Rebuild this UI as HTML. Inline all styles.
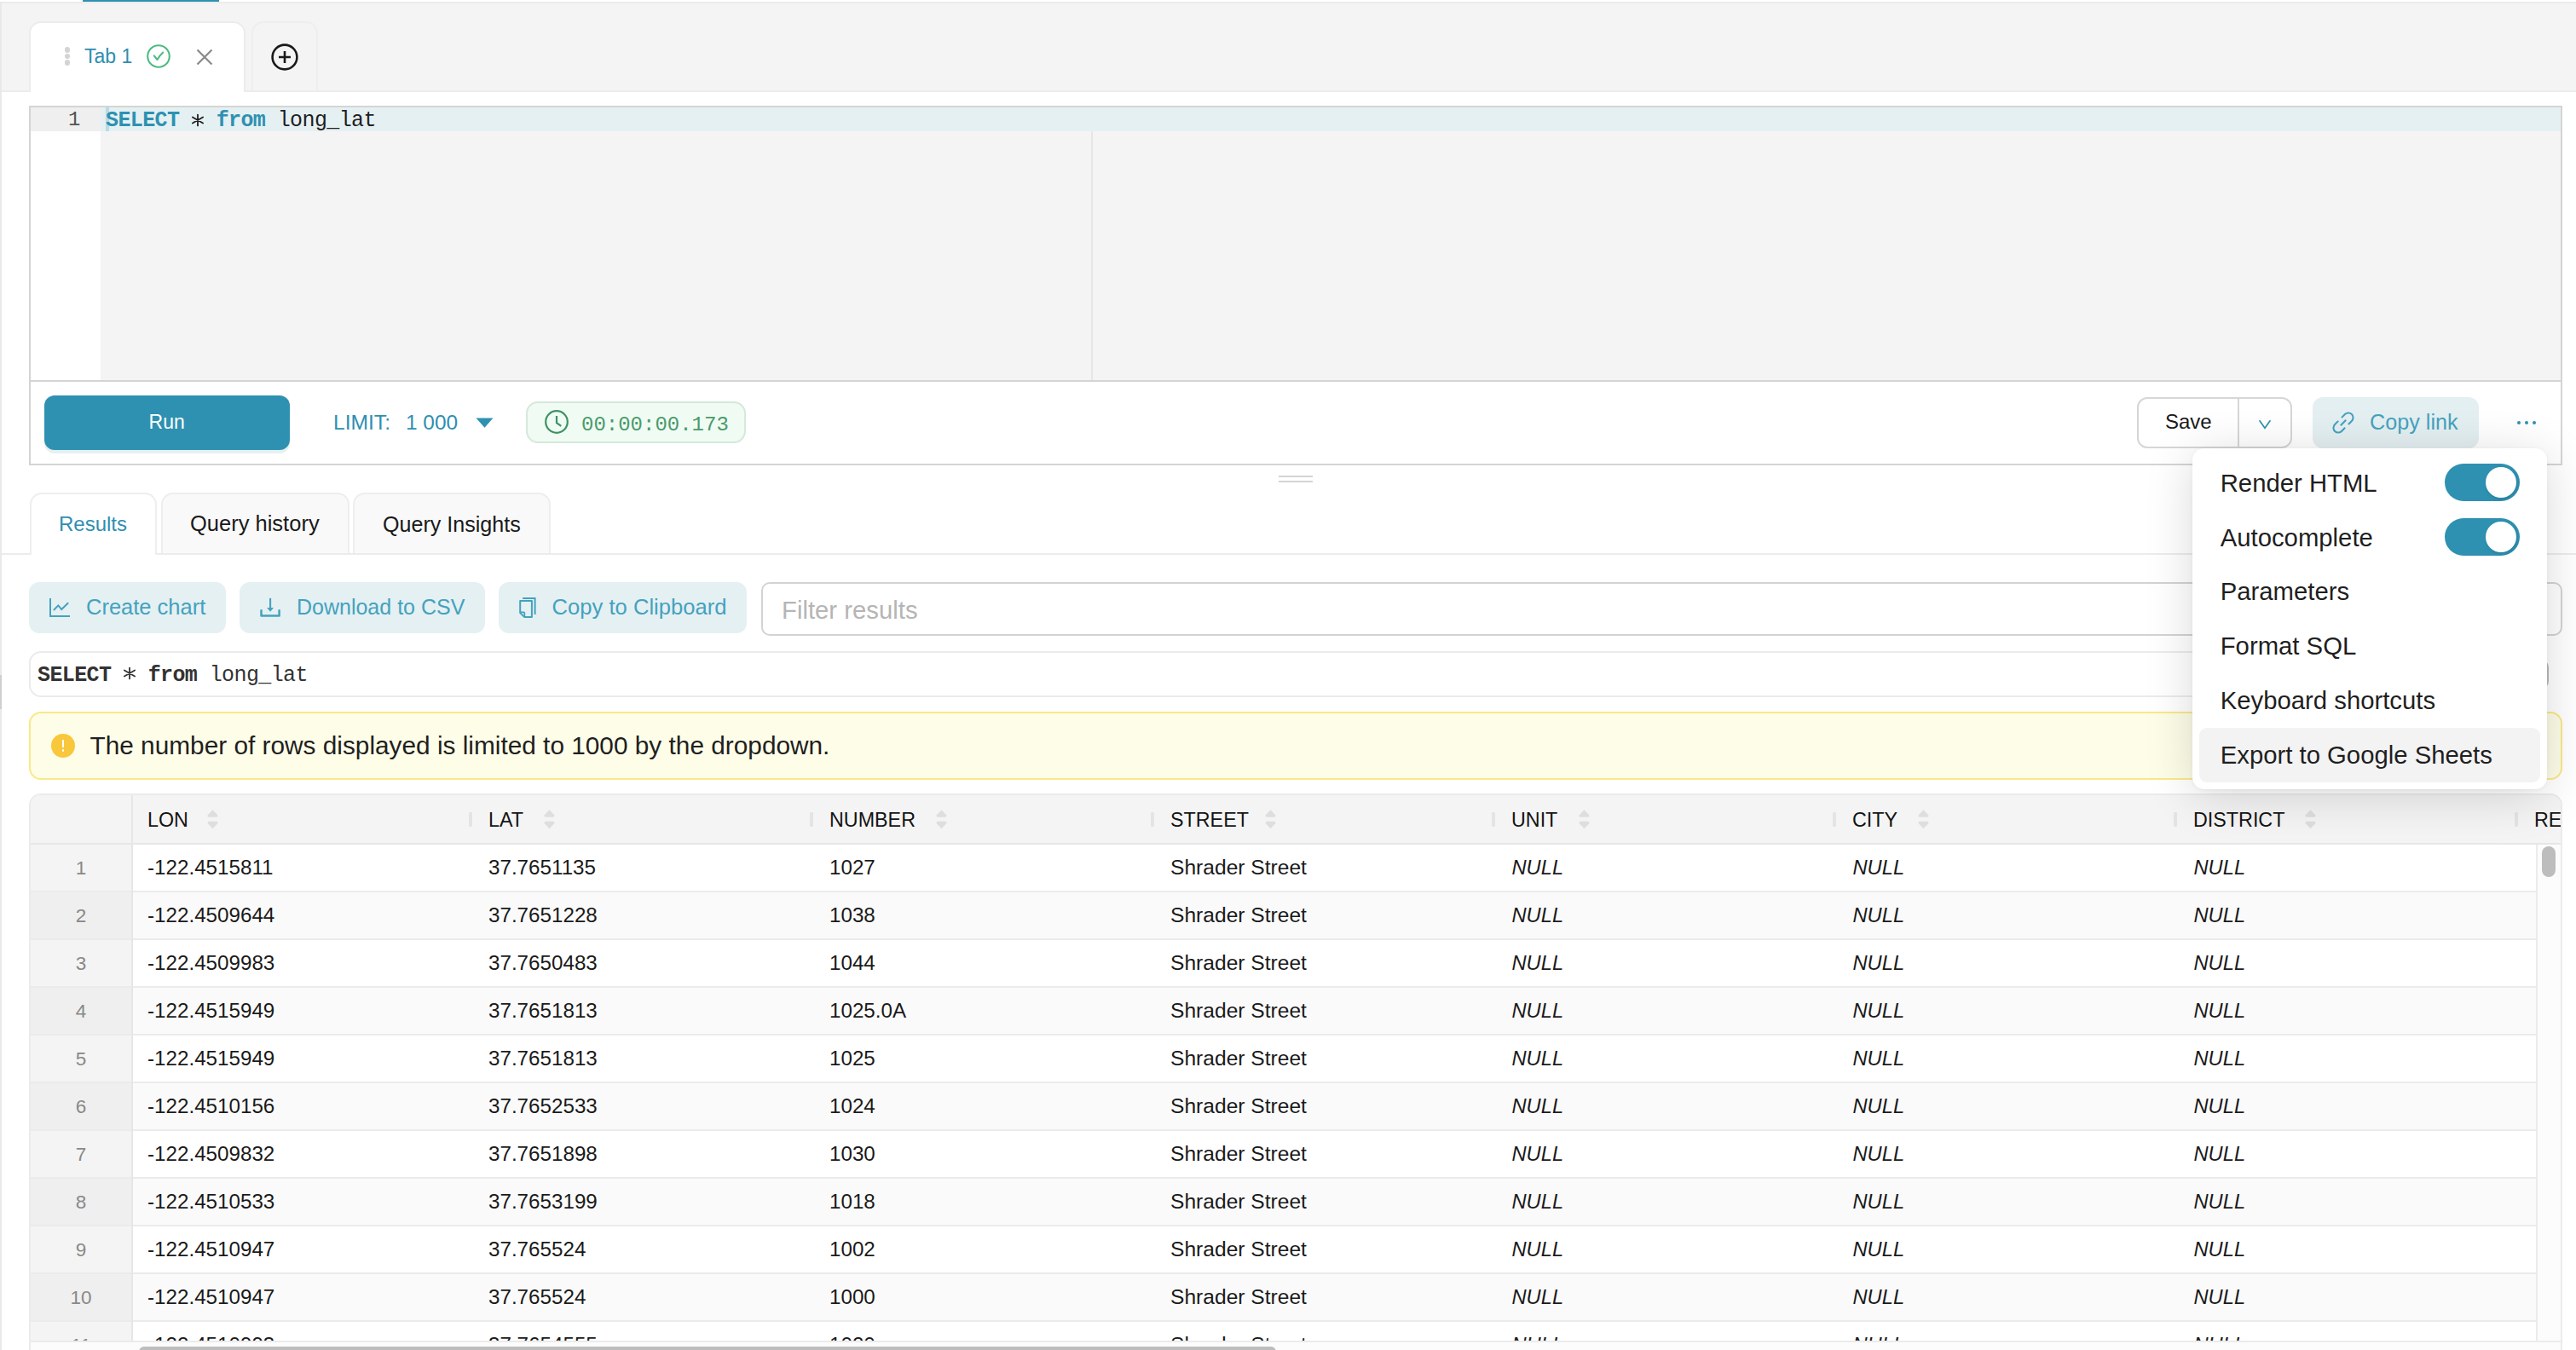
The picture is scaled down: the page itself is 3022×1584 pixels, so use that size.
<!DOCTYPE html>
<html><head><meta charset="utf-8"><title>SQL Editor</title>
<style>html,body{margin:0;padding:0;width:3022px;height:1584px;overflow:hidden;background:#fff;font-family:'Liberation Sans', sans-serif} b{font-weight:bold}</style>
</head><body>
<div style="position:absolute;left:0px;top:0px;width:3022px;height:1584px;background:#fff"></div>
<div style="position:absolute;left:0px;top:2px;width:3022px;height:106px;background:#f4f4f4;border-top:2px solid #ececec;border-bottom:2px solid #ececec;box-sizing:border-box"></div>
<div style="position:absolute;left:97px;top:0px;width:160px;height:2px;background:#2e91b1"></div>
<div style="position:absolute;left:0px;top:2px;width:2px;height:1582px;background:#e9e9e9"></div>
<div style="position:absolute;left:0px;top:792px;width:2px;height:40px;background:#cfcfcf"></div>
<div style="position:absolute;left:34px;top:25px;width:254px;height:82px;background:#fff;border:2px solid #ececec;border-bottom:none;border-radius:14px 14px 0 0;box-sizing:border-box"></div>
<div style="position:absolute;left:36px;top:100px;width:250px;height:10px;background:#fff"></div>
<div style="position:absolute;left:295px;top:25px;width:78px;height:81px;background:#f4f4f4;border:2px solid #eeeeee;border-bottom:none;border-radius:14px 14px 0 0;box-sizing:border-box"></div>
<div style="position:absolute;left:76px;top:55.3px;width:6.4px;height:6.4px;background:#d4d4d4;border-radius:50%"></div>
<div style="position:absolute;left:76px;top:62.8px;width:6.4px;height:6.4px;background:#d4d4d4;border-radius:50%"></div>
<div style="position:absolute;left:76px;top:70.3px;width:6.4px;height:6.4px;background:#d4d4d4;border-radius:50%"></div>
<div style="position:absolute;left:99px;top:54.95px;font:normal normal 23px/23px 'Liberation Sans', sans-serif;color:#2e8fb0;white-space:pre;letter-spacing:0px;">Tab 1</div>
<svg style="position:absolute;left:170px;top:50px" width="32" height="32" viewBox="0 0 32 32"><circle cx="16" cy="16" r="12.8" fill="none" stroke="#4dbb82" stroke-width="2.1"/><path d="M10.8 15.4 L14.5 20 Q17.2 15.2 21.2 11.5" fill="none" stroke="#4dbb82" stroke-width="2.1" stroke-linecap="round" stroke-linejoin="round"/></svg>
<svg style="position:absolute;left:228px;top:55px" width="24" height="24" viewBox="0 0 24 24"><path d="M3.5 3.5 L20.5 20.5 M20.5 3.5 L3.5 20.5" stroke="#8a8a8a" stroke-width="2.2"/></svg>
<svg style="position:absolute;left:316px;top:49px" width="36" height="36" viewBox="0 0 36 36"><circle cx="18" cy="18" r="14.4" fill="none" stroke="#1a1a1a" stroke-width="2.6"/><path d="M18 11 V25 M11 18 H25" stroke="#1a1a1a" stroke-width="2.6"/></svg>
<div style="position:absolute;left:34px;top:124px;width:2972px;height:324px;background:#f4f4f4;border:2px solid #d4d4d4;box-sizing:border-box"></div>
<div style="position:absolute;left:36px;top:126px;width:82px;height:320px;background:#fff"></div>
<div style="position:absolute;left:36px;top:126px;width:82px;height:28px;background:#efefef"></div>
<div style="position:absolute;left:118px;top:126px;width:2886px;height:28px;background:#e5f0f3"></div>
<div style="position:absolute;left:1280px;top:154px;width:2px;height:292px;background:#e6e6e6"></div>
<div style="position:absolute;left:124px;top:126px;width:4px;height:28px;background:#b9dbe6"></div>
<div style="position:absolute;left:80px;top:128.76px;font:normal normal 24px/24px 'Liberation Mono', monospace;color:#555;white-space:pre;letter-spacing:0px;">1</div>
<div style="position:absolute;left:124px;top:128.80px;font:25px/25px 'Liberation Mono', monospace;letter-spacing:-0.6px;color:#1f1f1f;white-space:pre"><b style="color:#2e91b1">SELECT</b>   <b style="color:#2e91b1">from</b> long_lat</div>
<svg style="position:absolute;left:223.4px;top:131.6px" width="18" height="18" viewBox="-9 -9 18 18"><path d="M0 -6.4 V6.4 M-6.1 -3.5 L6.1 3.5 M-6.1 3.5 L6.1 -3.5" stroke="#1f1f1f" stroke-width="1.8" stroke-linecap="round"/></svg>
<div style="position:absolute;left:34px;top:448px;width:2972px;height:98px;background:#fff;border:2px solid #d4d4d4;border-top:none;box-sizing:border-box"></div>
<div style="position:absolute;left:52px;top:464px;width:288px;height:64px;background:#2e91b1;border-radius:12px;box-shadow:0 4px 0 #e5f0f2"></div>
<div style="position:absolute;left:174.6px;top:484.45px;font:normal normal 23px/23px 'Liberation Sans', sans-serif;color:#fff;white-space:pre;letter-spacing:0px;">Run</div>
<div style="position:absolute;left:391px;top:483.59px;font:normal normal 24.6px/24.6px 'Liberation Sans', sans-serif;color:#2e8fb0;white-space:pre;letter-spacing:0px;">LIMIT:</div>
<div style="position:absolute;left:476px;top:483.76px;font:normal normal 24.4px/24.4px 'Liberation Sans', sans-serif;color:#2e8fb0;white-space:pre;letter-spacing:0px;">1 000</div>
<svg style="position:absolute;left:558px;top:490px" width="21" height="12" viewBox="0 0 21 12"><path d="M0.5 0.5 H20.5 L10.5 11.8 Z" fill="#2e91b1"/></svg>
<div style="position:absolute;left:617px;top:471px;width:258px;height:49px;background:#f0fbf3;border:2px solid #d5e9da;border-radius:14px;box-sizing:border-box"></div>
<svg style="position:absolute;left:637px;top:479px" width="32" height="32" viewBox="0 0 32 32"><circle cx="16" cy="16" r="12.8" fill="none" stroke="#3d9264" stroke-width="2.2"/><path d="M16 9 V17.2 L21.3 20.8" fill="none" stroke="#3d9264" stroke-width="2.2"/></svg>
<div style="position:absolute;left:682px;top:486.76px;font:normal normal 24px/24px 'Liberation Mono', monospace;color:#4a9a6c;white-space:pre;letter-spacing:0px;">00:00:00.173</div>
<div style="position:absolute;left:2507px;top:466px;width:182px;height:60px;background:#fff;border:2px solid #d6d6d6;border-radius:12px;box-sizing:border-box"></div>
<div style="position:absolute;left:2625px;top:466px;width:2px;height:60px;background:#d6d6d6"></div>
<div style="position:absolute;left:2540px;top:482.70px;font:normal normal 24px/24px 'Liberation Sans', sans-serif;color:#1a1a1a;white-space:pre;letter-spacing:0px;">Save</div>
<svg style="position:absolute;left:2648px;top:490px" width="18" height="16" viewBox="0 0 18 16"><path d="M2.6 3.3 L9 12.2 L15.4 3.3" fill="none" stroke="#2e91b1" stroke-width="1.7"/></svg>
<div style="position:absolute;left:2713px;top:466px;width:195px;height:60px;background:#e4eff2;border-radius:12px"></div>
<svg style="position:absolute;left:2729px;top:476px" width="40" height="40" viewBox="-20 -20 40 40"><g transform="rotate(45)" fill="none" stroke="#44a2bd" stroke-width="2.1"><path d="M-5.6 2.6 V8.4 A5.6 5.6 0 0 0 5.6 8.4 V2.6"/><path d="M-5.6 -2.7 V-8.4 A5.6 5.6 0 0 1 5.6 -8.4 V-2.7"/><path d="M0 -4.5 V4.5"/></g></svg>
<div style="position:absolute;left:2780px;top:482.58px;font:normal normal 25.2px/25.2px 'Liberation Sans', sans-serif;color:#44a2bd;white-space:pre;letter-spacing:0px;">Copy link</div>
<div style="position:absolute;left:2953px;top:494px;width:4px;height:4px;background:#2e91b1;border-radius:50%"></div>
<div style="position:absolute;left:2962px;top:494px;width:4px;height:4px;background:#2e91b1;border-radius:50%"></div>
<div style="position:absolute;left:2971px;top:494px;width:4px;height:4px;background:#2e91b1;border-radius:50%"></div>
<div style="position:absolute;left:1500px;top:558px;width:40px;height:2px;background:#d4d4d4"></div>
<div style="position:absolute;left:1500px;top:564px;width:40px;height:2px;background:#d4d4d4"></div>
<div style="position:absolute;left:2px;top:649px;width:3020px;height:2px;background:#ececec"></div>
<div style="position:absolute;left:35px;top:578px;width:149px;height:73px;background:#fff;border:2px solid #eeeeee;border-bottom:none;border-radius:14px 14px 0 0;box-sizing:border-box"></div>
<div style="position:absolute;left:189px;top:578px;width:221px;height:71px;background:#f9f9f9;border:2px solid #eeeeee;border-bottom:none;border-radius:14px 14px 0 0;box-sizing:border-box"></div>
<div style="position:absolute;left:414px;top:578px;width:232px;height:71px;background:#f9f9f9;border:2px solid #eeeeee;border-bottom:none;border-radius:14px 14px 0 0;box-sizing:border-box"></div>
<div style="position:absolute;left:69px;top:602.50px;font:normal normal 24px/24px 'Liberation Sans', sans-serif;color:#2e8fb0;white-space:pre;letter-spacing:0px;">Results</div>
<div style="position:absolute;left:223px;top:602.33px;font:normal normal 25.5px/25.5px 'Liberation Sans', sans-serif;color:#1a1a1a;white-space:pre;letter-spacing:0px;">Query history</div>
<div style="position:absolute;left:449px;top:602.66px;font:normal normal 25.1px/25.1px 'Liberation Sans', sans-serif;color:#1a1a1a;white-space:pre;letter-spacing:0px;">Query Insights</div>
<div style="position:absolute;left:34px;top:683px;width:231px;height:60px;background:#e5f0f3;border-radius:12px"></div>
<div style="position:absolute;left:281px;top:683px;width:288px;height:60px;background:#e5f0f3;border-radius:12px"></div>
<div style="position:absolute;left:585px;top:683px;width:291px;height:60px;background:#e5f0f3;border-radius:12px"></div>
<svg style="position:absolute;left:57px;top:701px" width="27" height="24" viewBox="0 0 27 24"><path d="M2 1 V21.9 H25" fill="none" stroke="#44a2bd" stroke-width="2"/><path d="M5.9 15 L11.3 9.4 L15.2 14 L23.2 6.3" fill="none" stroke="#44a2bd" stroke-width="2"/></svg>
<div style="position:absolute;left:101px;top:700.03px;font:normal normal 25.5px/25.5px 'Liberation Sans', sans-serif;color:#44a2bd;white-space:pre;letter-spacing:0px;">Create chart</div>
<svg style="position:absolute;left:300px;top:698px" width="32" height="28" viewBox="0 0 32 28"><path d="M6.5 18.3 V24.6 H27.6 V18.3" fill="none" stroke="#44a2bd" stroke-width="2.5" stroke-linejoin="round" stroke-linecap="round"/><path d="M17.1 3.9 V15.5" fill="none" stroke="#44a2bd" stroke-width="2.1"/><path d="M13.1 15 H21 L17.1 19.7 Z" fill="#44a2bd"/></svg>
<div style="position:absolute;left:348px;top:700.45px;font:normal normal 25px/25px 'Liberation Sans', sans-serif;color:#44a2bd;white-space:pre;letter-spacing:0px;">Download to CSV</div>
<svg style="position:absolute;left:606px;top:698px" width="26" height="30" viewBox="0 0 26 30"><path d="M7.2 4 H21.6 V23" fill="none" stroke="#44a2bd" stroke-width="2"/><path d="M4.2 7 H17.9 V25.9 H9 L4.2 21.1 Z" fill="none" stroke="#44a2bd" stroke-width="2" stroke-linejoin="round"/><path d="M4.6 20.4 H8.5 Q9.3 20.4 9.3 21.2 V25.3" fill="none" stroke="#44a2bd" stroke-width="1.8"/></svg>
<div style="position:absolute;left:647.6px;top:699.94px;font:normal normal 25.6px/25.6px 'Liberation Sans', sans-serif;color:#44a2bd;white-space:pre;letter-spacing:0px;">Copy to Clipboard</div>
<div style="position:absolute;left:893px;top:683px;width:2113px;height:63px;background:#fff;border:2px solid #d3d3d3;border-radius:10px;box-sizing:border-box"></div>
<div style="position:absolute;left:917px;top:700.60px;font:normal normal 29.3px/29.3px 'Liberation Sans', sans-serif;color:#b5b5b5;white-space:pre;letter-spacing:0px;">Filter results</div>
<div style="position:absolute;left:34px;top:764px;width:2900px;height:54px;background:#fff;border:2px solid #ebebeb;border-radius:14px;box-sizing:border-box"></div>
<div style="position:absolute;left:2980px;top:773px;width:10px;height:36px;background:#fff;border-right:2.5px solid #bdbdbd;border-radius:0 10px 10px 0;box-sizing:border-box"></div>
<div style="position:absolute;left:44px;top:780.30px;font:25px/25px 'Liberation Mono', monospace;letter-spacing:-0.6px;color:#333;white-space:pre"><b>SELECT</b>   <b>from</b> long_lat</div>
<svg style="position:absolute;left:143.4px;top:781px" width="18" height="18" viewBox="-9 -9 18 18"><path d="M0 -6.4 V6.4 M-6.1 -3.5 L6.1 3.5 M-6.1 3.5 L6.1 -3.5" stroke="#333" stroke-width="1.8" stroke-linecap="round"/></svg>
<div style="position:absolute;left:34px;top:835px;width:2972px;height:80px;background:#fefde8;border:2px solid #fae889;border-radius:14px;box-sizing:border-box"></div>
<div style="position:absolute;left:60px;top:861px;width:28px;height:28px;background:#f9c73b;border-radius:50%"></div>
<div style="position:absolute;left:73px;top:867.8px;width:2.3px;height:9.2px;background:#fff"></div>
<div style="position:absolute;left:72.9px;top:879.4px;width:2.5px;height:2.6px;background:#fff;border-radius:30%"></div>
<div style="position:absolute;left:105.5px;top:859.67px;font:normal normal 29.8px/29.8px 'Liberation Sans', sans-serif;color:#1f1f1f;white-space:pre;letter-spacing:0px;">The number of rows displayed is limited to 1000 by the dropdown.</div>
<div style="position:absolute;left:34px;top:931px;width:2972px;height:700px;border:2px solid #ebebeb;border-bottom:none;border-radius:14px 14px 0 0;box-sizing:border-box;overflow:hidden;background:#fff">
<div style="position:absolute;left:0px;top:0px;width:2968px;height:57px;background:#f4f4f4"></div>
<div style="position:absolute;left:0px;top:56px;width:2968px;height:2px;background:#e6e6e6"></div>
<div style="position:absolute;left:0px;top:58px;width:118px;height:56px;background:#f4f4f4"></div>
<div style="position:absolute;left:120px;top:58px;width:2819px;height:56px;background:#fff"></div>
<div style="position:absolute;left:0px;top:112px;width:2939px;height:2px;background:#ebebeb"></div>
<div style="position:absolute;left:0px;top:114px;width:118px;height:56px;background:#efefef"></div>
<div style="position:absolute;left:120px;top:114px;width:2819px;height:56px;background:#fafafa"></div>
<div style="position:absolute;left:0px;top:168px;width:2939px;height:2px;background:#ebebeb"></div>
<div style="position:absolute;left:0px;top:170px;width:118px;height:56px;background:#f4f4f4"></div>
<div style="position:absolute;left:120px;top:170px;width:2819px;height:56px;background:#fff"></div>
<div style="position:absolute;left:0px;top:224px;width:2939px;height:2px;background:#ebebeb"></div>
<div style="position:absolute;left:0px;top:226px;width:118px;height:56px;background:#efefef"></div>
<div style="position:absolute;left:120px;top:226px;width:2819px;height:56px;background:#fafafa"></div>
<div style="position:absolute;left:0px;top:280px;width:2939px;height:2px;background:#ebebeb"></div>
<div style="position:absolute;left:0px;top:282px;width:118px;height:56px;background:#f4f4f4"></div>
<div style="position:absolute;left:120px;top:282px;width:2819px;height:56px;background:#fff"></div>
<div style="position:absolute;left:0px;top:336px;width:2939px;height:2px;background:#ebebeb"></div>
<div style="position:absolute;left:0px;top:338px;width:118px;height:56px;background:#efefef"></div>
<div style="position:absolute;left:120px;top:338px;width:2819px;height:56px;background:#fafafa"></div>
<div style="position:absolute;left:0px;top:392px;width:2939px;height:2px;background:#ebebeb"></div>
<div style="position:absolute;left:0px;top:394px;width:118px;height:56px;background:#f4f4f4"></div>
<div style="position:absolute;left:120px;top:394px;width:2819px;height:56px;background:#fff"></div>
<div style="position:absolute;left:0px;top:448px;width:2939px;height:2px;background:#ebebeb"></div>
<div style="position:absolute;left:0px;top:450px;width:118px;height:56px;background:#efefef"></div>
<div style="position:absolute;left:120px;top:450px;width:2819px;height:56px;background:#fafafa"></div>
<div style="position:absolute;left:0px;top:504px;width:2939px;height:2px;background:#ebebeb"></div>
<div style="position:absolute;left:0px;top:506px;width:118px;height:56px;background:#f4f4f4"></div>
<div style="position:absolute;left:120px;top:506px;width:2819px;height:56px;background:#fff"></div>
<div style="position:absolute;left:0px;top:560px;width:2939px;height:2px;background:#ebebeb"></div>
<div style="position:absolute;left:0px;top:562px;width:118px;height:56px;background:#efefef"></div>
<div style="position:absolute;left:120px;top:562px;width:2819px;height:56px;background:#fafafa"></div>
<div style="position:absolute;left:0px;top:616px;width:2939px;height:2px;background:#ebebeb"></div>
<div style="position:absolute;left:0px;top:618px;width:118px;height:56px;background:#f4f4f4"></div>
<div style="position:absolute;left:120px;top:618px;width:2819px;height:56px;background:#fff"></div>
<div style="position:absolute;left:0px;top:672px;width:2939px;height:2px;background:#ebebeb"></div>
<div style="position:absolute;left:118px;top:0px;width:2px;height:700px;background:#e6e6e6"></div>
<div style="position:absolute;left:137px;top:17.80px;font:normal normal 23.3px/23.3px 'Liberation Sans', sans-serif;color:#141414;white-space:pre;letter-spacing:0px;">LON</div>
<svg style="position:absolute;left:207.0px;top:17px" width="13" height="23" viewBox="0 0 13 23"><path d="M6.5 0.3 L12.2 6.3 Q13 8.8 10.5 8.8 H2.5 Q0 8.8 0.8 6.3 Z" fill="#dedede"/><path d="M6.5 22.2 L12.2 16.2 Q13 13.7 10.5 13.7 H2.5 Q0 13.7 0.8 16.2 Z" fill="#dedede"/></svg>
<div style="position:absolute;left:514px;top:20px;width:4px;height:17px;background:#e4e4e4;border-radius:1px"></div>
<div style="position:absolute;left:537px;top:17.80px;font:normal normal 23.3px/23.3px 'Liberation Sans', sans-serif;color:#141414;white-space:pre;letter-spacing:0px;">LAT</div>
<svg style="position:absolute;left:601.8px;top:17px" width="13" height="23" viewBox="0 0 13 23"><path d="M6.5 0.3 L12.2 6.3 Q13 8.8 10.5 8.8 H2.5 Q0 8.8 0.8 6.3 Z" fill="#dedede"/><path d="M6.5 22.2 L12.2 16.2 Q13 13.7 10.5 13.7 H2.5 Q0 13.7 0.8 16.2 Z" fill="#dedede"/></svg>
<div style="position:absolute;left:914px;top:20px;width:4px;height:17px;background:#e4e4e4;border-radius:1px"></div>
<div style="position:absolute;left:937px;top:17.80px;font:normal normal 23.3px/23.3px 'Liberation Sans', sans-serif;color:#141414;white-space:pre;letter-spacing:0px;">NUMBER</div>
<svg style="position:absolute;left:1061.8px;top:17px" width="13" height="23" viewBox="0 0 13 23"><path d="M6.5 0.3 L12.2 6.3 Q13 8.8 10.5 8.8 H2.5 Q0 8.8 0.8 6.3 Z" fill="#dedede"/><path d="M6.5 22.2 L12.2 16.2 Q13 13.7 10.5 13.7 H2.5 Q0 13.7 0.8 16.2 Z" fill="#dedede"/></svg>
<div style="position:absolute;left:1314px;top:20px;width:4px;height:17px;background:#e4e4e4;border-radius:1px"></div>
<div style="position:absolute;left:1337px;top:17.80px;font:normal normal 23.3px/23.3px 'Liberation Sans', sans-serif;color:#141414;white-space:pre;letter-spacing:0px;">STREET</div>
<svg style="position:absolute;left:1448.4px;top:17px" width="13" height="23" viewBox="0 0 13 23"><path d="M6.5 0.3 L12.2 6.3 Q13 8.8 10.5 8.8 H2.5 Q0 8.8 0.8 6.3 Z" fill="#dedede"/><path d="M6.5 22.2 L12.2 16.2 Q13 13.7 10.5 13.7 H2.5 Q0 13.7 0.8 16.2 Z" fill="#dedede"/></svg>
<div style="position:absolute;left:1714px;top:20px;width:4px;height:17px;background:#e4e4e4;border-radius:1px"></div>
<div style="position:absolute;left:1737px;top:17.80px;font:normal normal 23.3px/23.3px 'Liberation Sans', sans-serif;color:#141414;white-space:pre;letter-spacing:0px;">UNIT</div>
<svg style="position:absolute;left:1815.6px;top:17px" width="13" height="23" viewBox="0 0 13 23"><path d="M6.5 0.3 L12.2 6.3 Q13 8.8 10.5 8.8 H2.5 Q0 8.8 0.8 6.3 Z" fill="#dedede"/><path d="M6.5 22.2 L12.2 16.2 Q13 13.7 10.5 13.7 H2.5 Q0 13.7 0.8 16.2 Z" fill="#dedede"/></svg>
<div style="position:absolute;left:2114px;top:20px;width:4px;height:17px;background:#e4e4e4;border-radius:1px"></div>
<div style="position:absolute;left:2137px;top:17.80px;font:normal normal 23.3px/23.3px 'Liberation Sans', sans-serif;color:#141414;white-space:pre;letter-spacing:0px;">CITY</div>
<svg style="position:absolute;left:2214.0px;top:17px" width="13" height="23" viewBox="0 0 13 23"><path d="M6.5 0.3 L12.2 6.3 Q13 8.8 10.5 8.8 H2.5 Q0 8.8 0.8 6.3 Z" fill="#dedede"/><path d="M6.5 22.2 L12.2 16.2 Q13 13.7 10.5 13.7 H2.5 Q0 13.7 0.8 16.2 Z" fill="#dedede"/></svg>
<div style="position:absolute;left:2514px;top:20px;width:4px;height:17px;background:#e4e4e4;border-radius:1px"></div>
<div style="position:absolute;left:2537px;top:17.80px;font:normal normal 23.3px/23.3px 'Liberation Sans', sans-serif;color:#141414;white-space:pre;letter-spacing:0px;">DISTRICT</div>
<svg style="position:absolute;left:2667.8px;top:17px" width="13" height="23" viewBox="0 0 13 23"><path d="M6.5 0.3 L12.2 6.3 Q13 8.8 10.5 8.8 H2.5 Q0 8.8 0.8 6.3 Z" fill="#dedede"/><path d="M6.5 22.2 L12.2 16.2 Q13 13.7 10.5 13.7 H2.5 Q0 13.7 0.8 16.2 Z" fill="#dedede"/></svg>
<div style="position:absolute;left:2914px;top:20px;width:4px;height:17px;background:#e4e4e4;border-radius:1px"></div>
<div style="position:absolute;left:2937px;top:17.80px;font:normal normal 23.3px/23.3px 'Liberation Sans', sans-serif;color:#141414;white-space:pre;letter-spacing:0px;">REGION</div>
<div style="position:absolute;left:0px;width:118px;top:74.58px;text-align:center;font:22.5px/22.5px 'Liberation Sans', sans-serif;color:#888">1</div>
<div style="position:absolute;left:137px;top:73.13px;font:normal normal 24.2px/24.2px 'Liberation Sans', sans-serif;color:#1a1a1a;white-space:pre;letter-spacing:0px;">-122.4515811</div>
<div style="position:absolute;left:537px;top:73.13px;font:normal normal 24.2px/24.2px 'Liberation Sans', sans-serif;color:#1a1a1a;white-space:pre;letter-spacing:0px;">37.7651135</div>
<div style="position:absolute;left:937px;top:73.13px;font:normal normal 24.2px/24.2px 'Liberation Sans', sans-serif;color:#1a1a1a;white-space:pre;letter-spacing:0px;">1027</div>
<div style="position:absolute;left:1337px;top:72.59px;font:normal normal 24.6px/24.6px 'Liberation Sans', sans-serif;color:#1a1a1a;white-space:pre;letter-spacing:0px;">Shrader Street</div>
<div style="position:absolute;left:1737.5px;top:73.76px;font:italic normal 23.7px/23.7px 'Liberation Sans', sans-serif;color:#1a1a1a;white-space:pre;letter-spacing:0px;">NULL</div>
<div style="position:absolute;left:2137.5px;top:73.76px;font:italic normal 23.7px/23.7px 'Liberation Sans', sans-serif;color:#1a1a1a;white-space:pre;letter-spacing:0px;">NULL</div>
<div style="position:absolute;left:2537.5px;top:73.76px;font:italic normal 23.7px/23.7px 'Liberation Sans', sans-serif;color:#1a1a1a;white-space:pre;letter-spacing:0px;">NULL</div>
<div style="position:absolute;left:0px;width:118px;top:130.58px;text-align:center;font:22.5px/22.5px 'Liberation Sans', sans-serif;color:#888">2</div>
<div style="position:absolute;left:137px;top:129.13px;font:normal normal 24.2px/24.2px 'Liberation Sans', sans-serif;color:#1a1a1a;white-space:pre;letter-spacing:0px;">-122.4509644</div>
<div style="position:absolute;left:537px;top:129.13px;font:normal normal 24.2px/24.2px 'Liberation Sans', sans-serif;color:#1a1a1a;white-space:pre;letter-spacing:0px;">37.7651228</div>
<div style="position:absolute;left:937px;top:129.13px;font:normal normal 24.2px/24.2px 'Liberation Sans', sans-serif;color:#1a1a1a;white-space:pre;letter-spacing:0px;">1038</div>
<div style="position:absolute;left:1337px;top:128.59px;font:normal normal 24.6px/24.6px 'Liberation Sans', sans-serif;color:#1a1a1a;white-space:pre;letter-spacing:0px;">Shrader Street</div>
<div style="position:absolute;left:1737.5px;top:129.76px;font:italic normal 23.7px/23.7px 'Liberation Sans', sans-serif;color:#1a1a1a;white-space:pre;letter-spacing:0px;">NULL</div>
<div style="position:absolute;left:2137.5px;top:129.76px;font:italic normal 23.7px/23.7px 'Liberation Sans', sans-serif;color:#1a1a1a;white-space:pre;letter-spacing:0px;">NULL</div>
<div style="position:absolute;left:2537.5px;top:129.76px;font:italic normal 23.7px/23.7px 'Liberation Sans', sans-serif;color:#1a1a1a;white-space:pre;letter-spacing:0px;">NULL</div>
<div style="position:absolute;left:0px;width:118px;top:186.58px;text-align:center;font:22.5px/22.5px 'Liberation Sans', sans-serif;color:#888">3</div>
<div style="position:absolute;left:137px;top:185.13px;font:normal normal 24.2px/24.2px 'Liberation Sans', sans-serif;color:#1a1a1a;white-space:pre;letter-spacing:0px;">-122.4509983</div>
<div style="position:absolute;left:537px;top:185.13px;font:normal normal 24.2px/24.2px 'Liberation Sans', sans-serif;color:#1a1a1a;white-space:pre;letter-spacing:0px;">37.7650483</div>
<div style="position:absolute;left:937px;top:185.13px;font:normal normal 24.2px/24.2px 'Liberation Sans', sans-serif;color:#1a1a1a;white-space:pre;letter-spacing:0px;">1044</div>
<div style="position:absolute;left:1337px;top:184.59px;font:normal normal 24.6px/24.6px 'Liberation Sans', sans-serif;color:#1a1a1a;white-space:pre;letter-spacing:0px;">Shrader Street</div>
<div style="position:absolute;left:1737.5px;top:185.76px;font:italic normal 23.7px/23.7px 'Liberation Sans', sans-serif;color:#1a1a1a;white-space:pre;letter-spacing:0px;">NULL</div>
<div style="position:absolute;left:2137.5px;top:185.76px;font:italic normal 23.7px/23.7px 'Liberation Sans', sans-serif;color:#1a1a1a;white-space:pre;letter-spacing:0px;">NULL</div>
<div style="position:absolute;left:2537.5px;top:185.76px;font:italic normal 23.7px/23.7px 'Liberation Sans', sans-serif;color:#1a1a1a;white-space:pre;letter-spacing:0px;">NULL</div>
<div style="position:absolute;left:0px;width:118px;top:242.58px;text-align:center;font:22.5px/22.5px 'Liberation Sans', sans-serif;color:#888">4</div>
<div style="position:absolute;left:137px;top:241.13px;font:normal normal 24.2px/24.2px 'Liberation Sans', sans-serif;color:#1a1a1a;white-space:pre;letter-spacing:0px;">-122.4515949</div>
<div style="position:absolute;left:537px;top:241.13px;font:normal normal 24.2px/24.2px 'Liberation Sans', sans-serif;color:#1a1a1a;white-space:pre;letter-spacing:0px;">37.7651813</div>
<div style="position:absolute;left:937px;top:241.13px;font:normal normal 24.2px/24.2px 'Liberation Sans', sans-serif;color:#1a1a1a;white-space:pre;letter-spacing:0px;">1025.0A</div>
<div style="position:absolute;left:1337px;top:240.59px;font:normal normal 24.6px/24.6px 'Liberation Sans', sans-serif;color:#1a1a1a;white-space:pre;letter-spacing:0px;">Shrader Street</div>
<div style="position:absolute;left:1737.5px;top:241.76px;font:italic normal 23.7px/23.7px 'Liberation Sans', sans-serif;color:#1a1a1a;white-space:pre;letter-spacing:0px;">NULL</div>
<div style="position:absolute;left:2137.5px;top:241.76px;font:italic normal 23.7px/23.7px 'Liberation Sans', sans-serif;color:#1a1a1a;white-space:pre;letter-spacing:0px;">NULL</div>
<div style="position:absolute;left:2537.5px;top:241.76px;font:italic normal 23.7px/23.7px 'Liberation Sans', sans-serif;color:#1a1a1a;white-space:pre;letter-spacing:0px;">NULL</div>
<div style="position:absolute;left:0px;width:118px;top:298.58px;text-align:center;font:22.5px/22.5px 'Liberation Sans', sans-serif;color:#888">5</div>
<div style="position:absolute;left:137px;top:297.13px;font:normal normal 24.2px/24.2px 'Liberation Sans', sans-serif;color:#1a1a1a;white-space:pre;letter-spacing:0px;">-122.4515949</div>
<div style="position:absolute;left:537px;top:297.13px;font:normal normal 24.2px/24.2px 'Liberation Sans', sans-serif;color:#1a1a1a;white-space:pre;letter-spacing:0px;">37.7651813</div>
<div style="position:absolute;left:937px;top:297.13px;font:normal normal 24.2px/24.2px 'Liberation Sans', sans-serif;color:#1a1a1a;white-space:pre;letter-spacing:0px;">1025</div>
<div style="position:absolute;left:1337px;top:296.59px;font:normal normal 24.6px/24.6px 'Liberation Sans', sans-serif;color:#1a1a1a;white-space:pre;letter-spacing:0px;">Shrader Street</div>
<div style="position:absolute;left:1737.5px;top:297.76px;font:italic normal 23.7px/23.7px 'Liberation Sans', sans-serif;color:#1a1a1a;white-space:pre;letter-spacing:0px;">NULL</div>
<div style="position:absolute;left:2137.5px;top:297.76px;font:italic normal 23.7px/23.7px 'Liberation Sans', sans-serif;color:#1a1a1a;white-space:pre;letter-spacing:0px;">NULL</div>
<div style="position:absolute;left:2537.5px;top:297.76px;font:italic normal 23.7px/23.7px 'Liberation Sans', sans-serif;color:#1a1a1a;white-space:pre;letter-spacing:0px;">NULL</div>
<div style="position:absolute;left:0px;width:118px;top:354.58px;text-align:center;font:22.5px/22.5px 'Liberation Sans', sans-serif;color:#888">6</div>
<div style="position:absolute;left:137px;top:353.13px;font:normal normal 24.2px/24.2px 'Liberation Sans', sans-serif;color:#1a1a1a;white-space:pre;letter-spacing:0px;">-122.4510156</div>
<div style="position:absolute;left:537px;top:353.13px;font:normal normal 24.2px/24.2px 'Liberation Sans', sans-serif;color:#1a1a1a;white-space:pre;letter-spacing:0px;">37.7652533</div>
<div style="position:absolute;left:937px;top:353.13px;font:normal normal 24.2px/24.2px 'Liberation Sans', sans-serif;color:#1a1a1a;white-space:pre;letter-spacing:0px;">1024</div>
<div style="position:absolute;left:1337px;top:352.59px;font:normal normal 24.6px/24.6px 'Liberation Sans', sans-serif;color:#1a1a1a;white-space:pre;letter-spacing:0px;">Shrader Street</div>
<div style="position:absolute;left:1737.5px;top:353.76px;font:italic normal 23.7px/23.7px 'Liberation Sans', sans-serif;color:#1a1a1a;white-space:pre;letter-spacing:0px;">NULL</div>
<div style="position:absolute;left:2137.5px;top:353.76px;font:italic normal 23.7px/23.7px 'Liberation Sans', sans-serif;color:#1a1a1a;white-space:pre;letter-spacing:0px;">NULL</div>
<div style="position:absolute;left:2537.5px;top:353.76px;font:italic normal 23.7px/23.7px 'Liberation Sans', sans-serif;color:#1a1a1a;white-space:pre;letter-spacing:0px;">NULL</div>
<div style="position:absolute;left:0px;width:118px;top:410.58px;text-align:center;font:22.5px/22.5px 'Liberation Sans', sans-serif;color:#888">7</div>
<div style="position:absolute;left:137px;top:409.13px;font:normal normal 24.2px/24.2px 'Liberation Sans', sans-serif;color:#1a1a1a;white-space:pre;letter-spacing:0px;">-122.4509832</div>
<div style="position:absolute;left:537px;top:409.13px;font:normal normal 24.2px/24.2px 'Liberation Sans', sans-serif;color:#1a1a1a;white-space:pre;letter-spacing:0px;">37.7651898</div>
<div style="position:absolute;left:937px;top:409.13px;font:normal normal 24.2px/24.2px 'Liberation Sans', sans-serif;color:#1a1a1a;white-space:pre;letter-spacing:0px;">1030</div>
<div style="position:absolute;left:1337px;top:408.59px;font:normal normal 24.6px/24.6px 'Liberation Sans', sans-serif;color:#1a1a1a;white-space:pre;letter-spacing:0px;">Shrader Street</div>
<div style="position:absolute;left:1737.5px;top:409.76px;font:italic normal 23.7px/23.7px 'Liberation Sans', sans-serif;color:#1a1a1a;white-space:pre;letter-spacing:0px;">NULL</div>
<div style="position:absolute;left:2137.5px;top:409.76px;font:italic normal 23.7px/23.7px 'Liberation Sans', sans-serif;color:#1a1a1a;white-space:pre;letter-spacing:0px;">NULL</div>
<div style="position:absolute;left:2537.5px;top:409.76px;font:italic normal 23.7px/23.7px 'Liberation Sans', sans-serif;color:#1a1a1a;white-space:pre;letter-spacing:0px;">NULL</div>
<div style="position:absolute;left:0px;width:118px;top:466.58px;text-align:center;font:22.5px/22.5px 'Liberation Sans', sans-serif;color:#888">8</div>
<div style="position:absolute;left:137px;top:465.13px;font:normal normal 24.2px/24.2px 'Liberation Sans', sans-serif;color:#1a1a1a;white-space:pre;letter-spacing:0px;">-122.4510533</div>
<div style="position:absolute;left:537px;top:465.13px;font:normal normal 24.2px/24.2px 'Liberation Sans', sans-serif;color:#1a1a1a;white-space:pre;letter-spacing:0px;">37.7653199</div>
<div style="position:absolute;left:937px;top:465.13px;font:normal normal 24.2px/24.2px 'Liberation Sans', sans-serif;color:#1a1a1a;white-space:pre;letter-spacing:0px;">1018</div>
<div style="position:absolute;left:1337px;top:464.59px;font:normal normal 24.6px/24.6px 'Liberation Sans', sans-serif;color:#1a1a1a;white-space:pre;letter-spacing:0px;">Shrader Street</div>
<div style="position:absolute;left:1737.5px;top:465.76px;font:italic normal 23.7px/23.7px 'Liberation Sans', sans-serif;color:#1a1a1a;white-space:pre;letter-spacing:0px;">NULL</div>
<div style="position:absolute;left:2137.5px;top:465.76px;font:italic normal 23.7px/23.7px 'Liberation Sans', sans-serif;color:#1a1a1a;white-space:pre;letter-spacing:0px;">NULL</div>
<div style="position:absolute;left:2537.5px;top:465.76px;font:italic normal 23.7px/23.7px 'Liberation Sans', sans-serif;color:#1a1a1a;white-space:pre;letter-spacing:0px;">NULL</div>
<div style="position:absolute;left:0px;width:118px;top:522.58px;text-align:center;font:22.5px/22.5px 'Liberation Sans', sans-serif;color:#888">9</div>
<div style="position:absolute;left:137px;top:521.13px;font:normal normal 24.2px/24.2px 'Liberation Sans', sans-serif;color:#1a1a1a;white-space:pre;letter-spacing:0px;">-122.4510947</div>
<div style="position:absolute;left:537px;top:521.13px;font:normal normal 24.2px/24.2px 'Liberation Sans', sans-serif;color:#1a1a1a;white-space:pre;letter-spacing:0px;">37.765524</div>
<div style="position:absolute;left:937px;top:521.13px;font:normal normal 24.2px/24.2px 'Liberation Sans', sans-serif;color:#1a1a1a;white-space:pre;letter-spacing:0px;">1002</div>
<div style="position:absolute;left:1337px;top:520.59px;font:normal normal 24.6px/24.6px 'Liberation Sans', sans-serif;color:#1a1a1a;white-space:pre;letter-spacing:0px;">Shrader Street</div>
<div style="position:absolute;left:1737.5px;top:521.76px;font:italic normal 23.7px/23.7px 'Liberation Sans', sans-serif;color:#1a1a1a;white-space:pre;letter-spacing:0px;">NULL</div>
<div style="position:absolute;left:2137.5px;top:521.76px;font:italic normal 23.7px/23.7px 'Liberation Sans', sans-serif;color:#1a1a1a;white-space:pre;letter-spacing:0px;">NULL</div>
<div style="position:absolute;left:2537.5px;top:521.76px;font:italic normal 23.7px/23.7px 'Liberation Sans', sans-serif;color:#1a1a1a;white-space:pre;letter-spacing:0px;">NULL</div>
<div style="position:absolute;left:0px;width:118px;top:578.58px;text-align:center;font:22.5px/22.5px 'Liberation Sans', sans-serif;color:#888">10</div>
<div style="position:absolute;left:137px;top:577.13px;font:normal normal 24.2px/24.2px 'Liberation Sans', sans-serif;color:#1a1a1a;white-space:pre;letter-spacing:0px;">-122.4510947</div>
<div style="position:absolute;left:537px;top:577.13px;font:normal normal 24.2px/24.2px 'Liberation Sans', sans-serif;color:#1a1a1a;white-space:pre;letter-spacing:0px;">37.765524</div>
<div style="position:absolute;left:937px;top:577.13px;font:normal normal 24.2px/24.2px 'Liberation Sans', sans-serif;color:#1a1a1a;white-space:pre;letter-spacing:0px;">1000</div>
<div style="position:absolute;left:1337px;top:576.59px;font:normal normal 24.6px/24.6px 'Liberation Sans', sans-serif;color:#1a1a1a;white-space:pre;letter-spacing:0px;">Shrader Street</div>
<div style="position:absolute;left:1737.5px;top:577.76px;font:italic normal 23.7px/23.7px 'Liberation Sans', sans-serif;color:#1a1a1a;white-space:pre;letter-spacing:0px;">NULL</div>
<div style="position:absolute;left:2137.5px;top:577.76px;font:italic normal 23.7px/23.7px 'Liberation Sans', sans-serif;color:#1a1a1a;white-space:pre;letter-spacing:0px;">NULL</div>
<div style="position:absolute;left:2537.5px;top:577.76px;font:italic normal 23.7px/23.7px 'Liberation Sans', sans-serif;color:#1a1a1a;white-space:pre;letter-spacing:0px;">NULL</div>
<div style="position:absolute;left:0px;width:118px;top:634.58px;text-align:center;font:22.5px/22.5px 'Liberation Sans', sans-serif;color:#888">11</div>
<div style="position:absolute;left:137px;top:633.13px;font:normal normal 24.2px/24.2px 'Liberation Sans', sans-serif;color:#1a1a1a;white-space:pre;letter-spacing:0px;">-122.4510993</div>
<div style="position:absolute;left:537px;top:633.13px;font:normal normal 24.2px/24.2px 'Liberation Sans', sans-serif;color:#1a1a1a;white-space:pre;letter-spacing:0px;">37.7654555</div>
<div style="position:absolute;left:937px;top:633.13px;font:normal normal 24.2px/24.2px 'Liberation Sans', sans-serif;color:#1a1a1a;white-space:pre;letter-spacing:0px;">1020</div>
<div style="position:absolute;left:1337px;top:632.59px;font:normal normal 24.6px/24.6px 'Liberation Sans', sans-serif;color:#1a1a1a;white-space:pre;letter-spacing:0px;">Shrader Street</div>
<div style="position:absolute;left:1737.5px;top:633.76px;font:italic normal 23.7px/23.7px 'Liberation Sans', sans-serif;color:#1a1a1a;white-space:pre;letter-spacing:0px;">NULL</div>
<div style="position:absolute;left:2137.5px;top:633.76px;font:italic normal 23.7px/23.7px 'Liberation Sans', sans-serif;color:#1a1a1a;white-space:pre;letter-spacing:0px;">NULL</div>
<div style="position:absolute;left:2537.5px;top:633.76px;font:italic normal 23.7px/23.7px 'Liberation Sans', sans-serif;color:#1a1a1a;white-space:pre;letter-spacing:0px;">NULL</div>
<div style="position:absolute;left:2939px;top:58px;width:2px;height:700px;background:#ebebeb"></div>
<div style="position:absolute;left:2941px;top:58px;width:27px;height:700px;background:#fcfcfc"></div>
<div style="position:absolute;left:2946px;top:60px;width:16px;height:36px;background:#bdbdbd;border-radius:8px"></div>
<div style="position:absolute;left:0px;top:640px;width:2968px;height:30px;background:#fcfcfc;border-top:2px solid #ebebeb;box-sizing:border-box"></div>
<div style="position:absolute;left:127px;top:647px;width:1334px;height:12px;background:#bdbdbd;border-radius:6px"></div>
</div>
<div style="position:absolute;left:2572px;top:526px;width:416px;height:400px;background:#fff;border-radius:14px;box-shadow:0 8px 56px rgba(0,0,0,0.15), 0 1px 5px rgba(0,0,0,0.05)"></div>
<div style="position:absolute;left:2580px;top:854px;width:400px;height:64px;background:#f3f3f3;border-radius:9px"></div>
<div style="position:absolute;left:2604.7px;top:551.70px;font:normal normal 29.3px/29.3px 'Liberation Sans', sans-serif;color:#1f1f1f;white-space:pre;letter-spacing:0px;">Render HTML</div>
<div style="position:absolute;left:2604.7px;top:615.80px;font:normal normal 29.3px/29.3px 'Liberation Sans', sans-serif;color:#1f1f1f;white-space:pre;letter-spacing:0px;">Autocomplete</div>
<div style="position:absolute;left:2604.7px;top:679.39px;font:normal normal 29.3px/29.3px 'Liberation Sans', sans-serif;color:#1f1f1f;white-space:pre;letter-spacing:0px;">Parameters</div>
<div style="position:absolute;left:2604.7px;top:743.39px;font:normal normal 29.3px/29.3px 'Liberation Sans', sans-serif;color:#1f1f1f;white-space:pre;letter-spacing:0px;">Format SQL</div>
<div style="position:absolute;left:2604.7px;top:807.39px;font:normal normal 29.3px/29.3px 'Liberation Sans', sans-serif;color:#1f1f1f;white-space:pre;letter-spacing:0px;">Keyboard shortcuts</div>
<div style="position:absolute;left:2604.7px;top:871.39px;font:normal normal 29.3px/29.3px 'Liberation Sans', sans-serif;color:#1f1f1f;white-space:pre;letter-spacing:0px;">Export to Google Sheets</div>
<div style="position:absolute;left:2868px;top:544px;width:88px;height:44px;background:#2e91b1;border-radius:22px"></div>
<div style="position:absolute;left:2916px;top:548px;width:36px;height:36px;background:#fff;border-radius:50%;box-shadow:1px 2px 4px rgba(0,0,0,0.12)"></div>
<div style="position:absolute;left:2868px;top:608px;width:88px;height:44px;background:#2e91b1;border-radius:22px"></div>
<div style="position:absolute;left:2916px;top:612px;width:36px;height:36px;background:#fff;border-radius:50%;box-shadow:1px 2px 4px rgba(0,0,0,0.12)"></div>
</body></html>
